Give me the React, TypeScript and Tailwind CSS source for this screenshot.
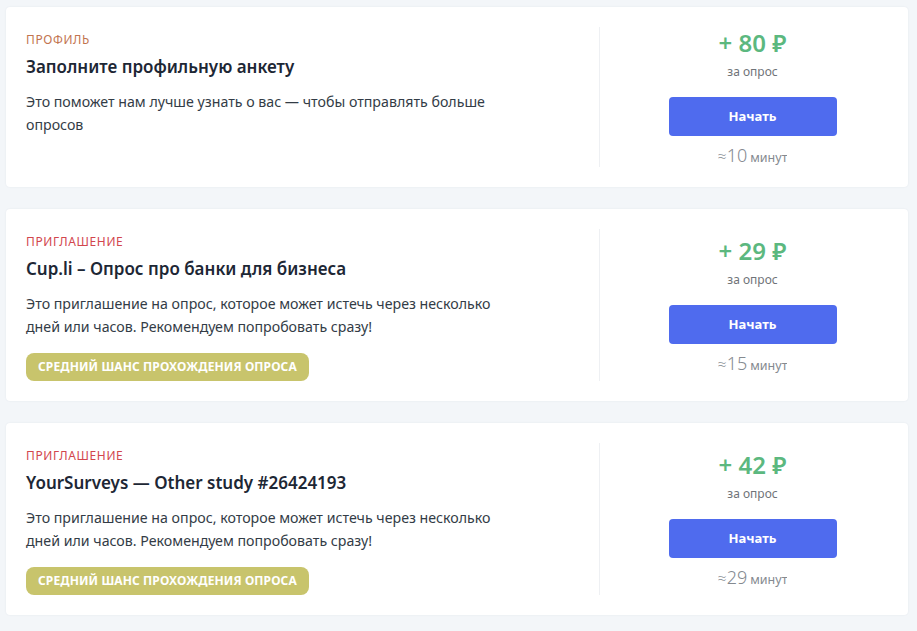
import React from "react";

type Offer = {
  kind: "profile" | "invite";
  label: string;
  title: string;
  text: string;
  reward: number;
  minutes: number;
  chance?: string;
};

const offers: Offer[] = [
  {
    kind: "profile",
    label: "Профиль",
    title: "Заполните профильную анкету",
    text: "Это поможет нам лучше узнать о вас — чтобы отправлять больше опросов",
    reward: 80,
    minutes: 10,
  },
  {
    kind: "invite",
    label: "Приглашение",
    title: "Cup.li – Опрос про банки для бизнеса",
    text: "Это приглашение на опрос, которое может истечь через несколько дней или часов. Рекомендуем попробовать сразу!",
    reward: 29,
    minutes: 15,
    chance: "Средний шанс прохождения опроса",
  },
  {
    kind: "invite",
    label: "Приглашение",
    title: "YourSurveys — Other study #26424193",
    text: "Это приглашение на опрос, которое может истечь через несколько дней или часов. Рекомендуем попробовать сразу!",
    reward: 42,
    minutes: 29,
    chance: "Средний шанс прохождения опроса",
  },
];

function OfferCard({ offer }: { offer: Offer }) {
  return (
    <div className="flex rounded-[4px] bg-white py-[20px] pl-[20px] shadow-[0_0_2px_rgba(30,50,80,0.08)]">
      {/* left: description */}
      <div className="flex-1 pt-[5px]">
        <div
          className={`text-[12px] leading-[16px] uppercase tracking-[0.6px] ${
            offer.kind === "profile" ? "text-[#c2744f]" : "text-[#d2464d]"
          }`}
        >
          {offer.label}
        </div>
        <div className="mt-[7px] text-[17px] font-semibold leading-[24px] text-[#1d2735]">
          {offer.title}
        </div>
        <p className="mt-[11px] max-w-[480px] text-[14.2px] leading-[23px] text-[#333c46]">
          {offer.text}
        </p>
        {offer.chance && (
          <div className="mt-[15px] inline-flex h-[28px] items-center rounded-[8px] bg-[#c8c46c] px-[12px] text-[12px] font-bold uppercase tracking-[0.1px] text-white">
            {offer.chance}
          </div>
        )}
      </div>

      {/* right: reward */}
      <div className="flex w-[309px] flex-col items-center justify-center border-l border-[#eef0f3] pr-[3px]">
        <div className="h-[32px] text-[24px] font-semibold leading-[32px] text-[#5cb87f]">
          + {offer.reward} ₽
        </div>
        <div className="mt-[5px] h-[16px] text-[12px] leading-[16px] text-[#6f7378]">за опрос</div>
        <button
          type="button"
          className="mt-[17px] h-[39px] w-[168px] rounded-[4px] bg-[#4f6bee] text-[13px] font-bold text-white"
        >
          Начать
        </button>
        <div className="mt-[7px] flex h-[24px] items-baseline overflow-hidden leading-[24px] text-[#858a90]">
          <span className="text-[16px] font-light">≈</span>
          <span className="text-[18px] font-light">{offer.minutes}</span>
          <span className="ml-[3px] text-[12.5px]">минут</span>
        </div>
      </div>
    </div>
  );
}

export default function App() {
  return (
    <div
      className="min-h-[631px] bg-[#f3f6f9] pt-[7px] pb-[16px] pl-[6px] pr-[9px]"
      style={{ fontFamily: '"Noto Sans", "Open Sans", sans-serif' }}
    >
      <div className="flex flex-col gap-[22px]">
        {offers.map((o) => (
          <OfferCard key={o.title} offer={o} />
        ))}
      </div>
    </div>
  );
}
